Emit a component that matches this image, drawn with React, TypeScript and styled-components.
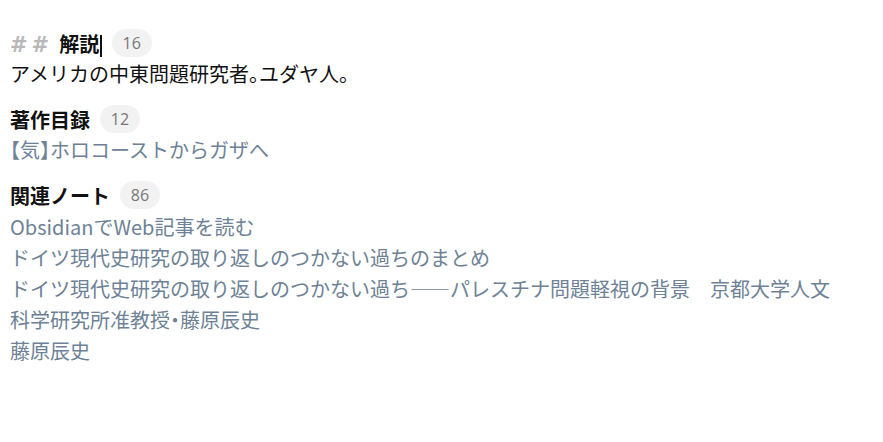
import styled, { createGlobalStyle } from 'styled-components'

const GlobalStyle = createGlobalStyle`
  html, body {
    margin: 0;
    padding: 0;
    background: #fff;
  }
  body {
    font-family: "Noto Sans CJK JP", "Noto Sans", sans-serif;
  }
`

const Page = styled.div`
  display: flex;
  flex-direction: column;
  padding: 27px 10px 0 10px;
  width: 883px;
  height: 442px;
  box-sizing: border-box;
  overflow: hidden;
`

const Section = styled.section`
  display: flex;
  flex-direction: column;
  margin-bottom: 14px;
`

const Heading = styled.div`
  display: flex;
  align-items: center;
  gap: 10px;
  height: 32px;
  font-size: 20px;
  font-weight: 600;
  color: #111;
`

const Marker = styled.span`
  color: #b8b8b8;
  font-family: "DejaVu Sans", sans-serif;
  font-weight: 700;
  font-size: 21px;
  letter-spacing: 4px;
  margin-right: 6px;
`

const Caret = styled.span`
  display: inline-block;
  width: 1.5px;
  height: 22px;
  background: #111;
  vertical-align: middle;
  margin-left: 1px;
`

const Count = styled.span`
  display: inline-flex;
  align-items: center;
  justify-content: center;
  min-width: 40px;
  height: 28px;
  padding: 0 9px;
  box-sizing: border-box;
  border-radius: 14px;
  background: #f2f2f2;
  color: #777;
  font-family: "Open Sans", "Noto Sans", sans-serif;
  font-size: 16px;
  font-weight: 400;
`

// punctuation set at half width ("halt"), brackets and stops stay tight
const Text = styled.p<{ $link?: boolean }>`
  margin: 0;
  font-size: 20px;
  line-height: 30px;
  font-feature-settings: "halt";
  color: ${(p) => (p.$link ? '#6d8296' : '#111')};
  width: 832px;
`

const List = styled.div`
  display: flex;
  flex-direction: column;

  & > p {
    line-height: 31px;
  }
`

const related = [
  'ObsidianでWeb記事を読む',
  'ドイツ現代史研究の取り返しのつかない過ちのまとめ',
  'ドイツ現代史研究の取り返しのつかない過ち――パレスチナ問題軽視の背景\u3000京都大学人文科学研究所准教授・藤原辰史',
  '藤原辰史',
]

export default function App() {
  return (
    <>
      <GlobalStyle />
      <Page>
        <Section>
          <Heading>
            <span>
              <Marker>##</Marker>解説
              <Caret />
            </span>
            <Count>16</Count>
          </Heading>
          <Text>アメリカの中東問題研究者。ユダヤ人。</Text>
        </Section>
        <Section>
          <Heading>
            <span>著作目録</span>
            <Count>12</Count>
          </Heading>
          <Text $link>【気】ホロコーストからガザへ</Text>
        </Section>
        <Section>
          <Heading>
            <span>関連ノート</span>
            <Count>86</Count>
          </Heading>
          <List>
            {related.map((title) => (
              <Text $link key={title}>
                {title}
              </Text>
            ))}
          </List>
        </Section>
      </Page>
    </>
  )
}
